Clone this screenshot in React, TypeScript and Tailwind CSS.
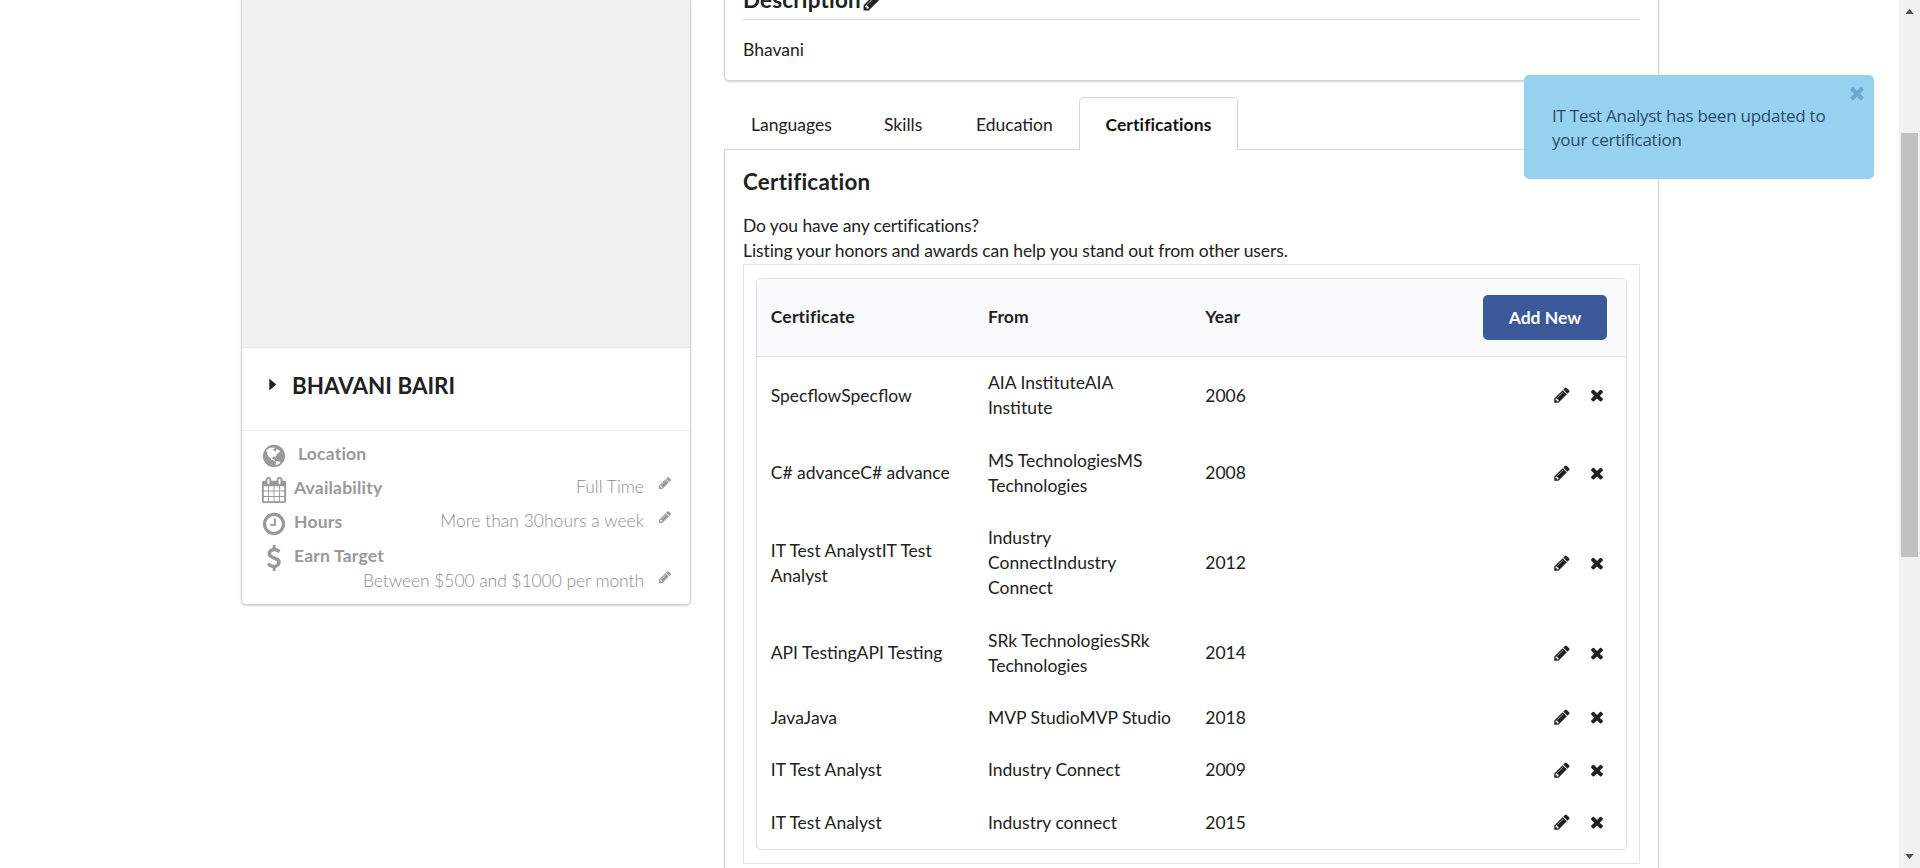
import React from "react";

const GLYPHS = {
  pencil:
    "M491 1536l91-91-235-235-91 91v107h128v128h107zm523-928q0-22-22-22-10 0-17 7l-542 542q-7 7-7 17 0 22 22 22 10 0 17-7l542-542q7-7 7-17zm-54-192l416 416-832 832h-416v-416zm683 96q0 53-37 90l-166 166-416-416 166-165q36-38 90-38 53 0 91 38l235 234q37 39 37 91z",
  times:
    "M1490 1322q0 40-28 68l-136 136q-28 28-68 28t-68-28l-294-294-294 294q-28 28-68 28t-68-28l-136-136q-28-28-28-68t28-68l294-294-294-294q-28-28-28-68t28-68l136-136q28-28 68-28t68 28l294 294 294-294q28-28 68-28t68 28l136 136q28 28 28 68t-28 68l-294 294 294 294q28 28 28 68z",
  dollar:
    "M1362 1185q0 153-99.5 263.5t-258.5 136.5v175q0 14-9 23t-23 9h-135q-13 0-22.5-9.5t-9.5-22.5v-175q-66-9-127.5-31t-101.5-44.5-74-48-46.5-37.5-17.5-18q-17-21-2-41l103-135q7-10 23-12 15-2 24 9l2 2q113 99 243 125 37 8 74 8 81 0 142.5-43t61.5-122q0-28-15-53t-33.5-42-58.5-37.5-66-32-80-32.5q-39-16-61.5-25t-61.5-26.5-62.5-31-56.5-35.5-53.5-42.5-43.5-49-35.5-58-21-66.5-8.5-78q0-138 98-242t255-134v-180q0-13 9.5-22.5t22.5-9.5h135q14 0 23 9t9 23v176q57 6 110.5 23t87 33.5 63.5 37.5 39 29 15 14q17 18 5 38l-81 146q-8 15-23 16-14 3-27-7-3-3-14.5-12t-39-26.5-58.5-32-74.5-26-85.5-11.5q-95 0-155 43t-60 111q0 26 8.5 48t29.5 41.5 39.5 33 56 31 60.5 27 70 27.5q53 20 81 31.5t76 35 75.5 42.5 62 50 53 63.5 31.5 76.5 13 94z",
  clock:
    "M1024 544v448q0 14-9 23t-23 9h-320q-14 0-23-9t-9-23v-64q0-14 9-23t23-9h224v-352q0-14 9-23t23-9h64q14 0 23 9t9 23zm416 352q0-148-73-273t-198-198-273-73-273 73-198 198-73 273 73 273 198 198 273 73 273-73 198-198 73-273zm224 0q0 209-103 385.5t-279.5 279.5-385.5 103-385.5-103-279.5-279.5-103-385.5 103-385.5 279.5-279.5 385.5-103 385.5 103 279.5 279.5 103 385.5z",
  calendar:
    "M192 1664h288v-288h-288v288zm352 0h320v-288h-320v288zm-352-352h288v-320h-288v320zm352 0h320v-320h-320v320zm-352-384h288v-288h-288v288zm736 736h320v-288h-320v288zm-384-736h320v-288h-320v288zm768 736h288v-288h-288v288zm-384-352h320v-320h-320v320zm-352-864v-288q0-13-9.5-22.5t-22.5-9.5h-64q-13 0-22.5 9.5t-9.5 22.5v288q0 13 9.5 22.5t22.5 9.5h64q13 0 22.5-9.5t9.5-22.5zm736 864h288v-320h-288v320zm-384-384h320v-288h-320v288zm384 0h288v-288h-288v288zm32-480v-288q0-13-9.5-22.5t-22.5-9.5h-64q-13 0-22.5 9.5t-9.5 22.5v288q0 13 9.5 22.5t22.5 9.5h64q13 0 22.5-9.5t9.5-22.5zm384-64v1280q0 52-38 90t-90 38h-1408q-52 0-90-38t-38-90v-1280q0-52 38-90t90-38h128v-96q0-66 47-113t113-47h64q66 0 113 47t47 113v96h384v-96q0-66 47-113t113-47h64q66 0 113 47t47 113v96h128q52 0 90 38t38 90z",
  globe:
    "M896 128q209 0 385.5 103t279.5 279.5 103 385.5-103 385.5-279.5 279.5-385.5 103-385.5-103-279.5-279.5-103-385.5 103-385.5 279.5-279.5 385.5-103zm274 521q-2 1-9.5 9.5t-13.5 9.5q2 0 4.5-5t5-11 3.5-7q6-7 22-15 14-6 52-12 34-8 51 11-2-2 9.5-13t14.5-12q3-2 15-4.5t15-7.5l2-22q-12 1-17.5-7t-6.5-21q0 2-6 8 0-7-4.5-8t-11.5 1-9 1q-10-3-15-7.5t-8-16.5-4-15q-2-5-9.5-11t-9.5-10q-1-2-2.5-5.5t-3-6.5-4-5.5-5.5-2.5-7 5-7.5 10-4.5 5q-3-2-6-1.5t-4.5 1-4.5 3-5 3.5q-3 2-8.5 3t-8.5 2q15-5-1-11-10-4-16-3 9-4 7.5-12t-8.5-14h5q-1-4-8.5-8.5t-17.5-8.5-13-6q-8-5-34-9.5t-33-.5q-5 6-4.5 10.5t4 14 3.5 12.5q1 6-5.5 13t-6.5 12q0 7 14 15.5t10 21.5q-3 8-16 16t-16 12q-5 8-1.5 18.5t10.5 16.5q2 2 1.5 4t-3.5 4.5-5.5 4-6.5 3.5l-3 2q-11 5-20.5-6t-13.5-26q-7-25-16-30-23-8-29 1-5-13-41-26-25-9-58-4 6-1 0-15-7-15-19-12 3-6 4-17.5t1-13.5q3-13 12-23 1-1 7-8.5t9.5-13.5.5-6q35 4 50-11 5-5 11.5-17t10.5-17q9-6 14-5.5t14.5 5.5 14.5 5q14 1 15.5-11t-7.5-20q12 1 3-17-4-7-8-9-12-4-27 5-8 4 2 8-1-1-9.5 10.5t-16.5 17.5-16-5q-1-1-5.5-13.5t-9.5-13.5q-8 0-16 15 3-8-11-15t-24-8q19-12-8-27-7-4-20.5-5t-19.5 4q-5 7-5.5 11.5t5 8 10.5 5.5 11.5 4 8.5 3q14 10 8 14-2 1-8.5 3.5t-11.5 4.5-6 4q-3 4 0 14t-2 14q-5-5-9-17.5t-7-16.5q7 9-25 6l-10-1q-4 0-16 2t-20.5 1-13.5-8q-4-8 0-20 1-4 4-2-4-3-11-9.5t-10-8.5q-46 15-94 41 6 1 12-1 5-2 13-6.5t10-5.5q34-14 42-7l5-5q14 16 20 25-7-4-30-1-20 6-22 12 7 12 5 18-4-3-11.5-10t-14.5-11-15-5q-16 0-22 1-146 80-235 222 7 7 12 8 4 1 5 9t2.5 11 11.5-3q9 8 3 19 1-1 44 27 19 17 21 21 3 11-10 18-1-2-9-9t-9-4q-3 5 .5 18.5t10.5 12.5q-7 0-9.5 16t-2.5 35.5-1 23.5l2 1q-3 12 5.5 34.5t21.5 19.5q-13 3 20 43 6 8 8 9 3 2 12 7.5t15 10 10 10.5q4 5 10 22.5t14 23.5q-2 6 9.5 20t10.5 23q-1 0-2.5 1t-2.5 1q3 7 15.5 14t15.5 13q1 3 2 10t3 11 8 2q2-20-24-62-15-25-17-29-3-5-5.5-15.5t-4.5-14.5q2 0 6 1.5t8.5 3.5 7.5 4 2 3q-3 7 2 17.5t12 18.5 17 19 12 13q6 6 14 19.5t0 13.5q9 0 20 10.5t17 19.5q5 8 8 26t5 24q2 7 8.5 13.5t12.5 9.5l16 8 13 7q5 2 18.5 10.5t21.5 11.5q10 4 16 4t14.5-2.5 13.5-3.5q15-2 29 15t21 21q36 19 55 11-2 1 .5 7.5t8 15.5 9 14.5 5.5 8.5q5 6 18 15t18 15q6-4 7-9-3 8 7 20t18 10q14-3 14-32-31 15-49-18 0-1-2.5-5.5t-4-8.5-2.5-8.5 0-7.5 5-3q9 0 10-3.5t-2-12.5-4-13q-1-8-11-20t-12-15q-5 9-16 8t-16-9q0 1-1.5 5.5t-1.5 6.5q-13 0-15-1 1-3 2.5-17.5t3.5-22.5q1-4 5.5-12t7.5-14.5 4-12.5-4.5-9.5-17.5-2.5q-19 1-26 20-1 3-3 10.5t-5 11.5-9 7q-7 3-24 2t-24-5q-13-8-22.5-29t-9.5-37q0-10 2.5-26.5t3-25-5.5-24.5q3-2 9-9.5t10-10.5q2-1 4.5-1.5t4.5 0 4-1.5 3-6q-1-1-4-3-3-3-4-3 7 3 28.5-1.5t27.5 1.5q15 11 22-2 0-1-2.5-9.5t-.5-13.5q5 27 29 9 3 3 15.5 5t17.5 5q3 2 7 5.5t5.5 4.5 5-.5 8.5-6.5q10 14 12 24 11 40 19 44 7 3 11 2t4.5-9.5 0-14-1.5-12.5l-1-8v-18l-1-8q-15-3-18.5-12t1.5-18.5 15-18.5q1-1 8-3.5t15.5-6.5 12.5-8q21-19 15-35 7 0 11-9-1 0-5-3t-7.5-5-4.5-2q9-5 2-16 5-3 7.5-11t7.5-10q9 12 21 2 7-8 1-16 5-7 20.5-10.5t18.5-9.5q7 2 8-2t1-12 3-12q4-5 15-9t13-5l17-11q3-4 0-4 18 2 31-11 10-11-6-20 3-6-3-9.5t-15-5.5q3-1 11.5-.5t10.5-1.5q15-10-7-16-17-5-43 12zm-163 877q206-36 351-189-3-3-12.5-4.5t-12.5-3.5q-18-7-24-8 1-7-2.5-13t-8-9-12.5-8-11-7q-2-2-7-6t-7-5.5-7.5-4.5-8.5-2-10 1l-3 1q-3 1-5.5 2.5t-5.5 3-4 3 0 2.5q-21-17-36-22-5-1-11-5.5t-10.5-7-10-1.5-11.5 7q-5 5-6 15t-2 13q-7-5 0-17.5t2-18.5q-3-6-10.5-4.5t-12 4.5-11.5 8.5-9 6.5-8.5 5.5-8.5 7.5q-3 4-6 12t-5 11q-2-4-11.5-6.5t-9.5-5.5q2 10 4 35t5 38q7 31-12 48-27 25-29 40-4 22 12 26 0 7-8 20.5t-7 21.5q0 6 2 16z",
};

function Icon({ name, className }: { name: keyof typeof GLYPHS; className?: string }) {
  return (
    <svg viewBox="0 0 1792 1792" className={className} fill="currentColor" aria-hidden="true">
      <path d={GLYPHS[name]} />
    </svg>
  );
}

const DETAILS: {
  icon: keyof typeof GLYPHS;
  label: string;
  value?: string;
  row: string;
  labelPad: string;
}[] = [
  { icon: "globe", label: "Location", row: "h-[34px]", labelPad: "pl-[11px]" },
  { icon: "calendar", label: "Availability", value: "Full Time", row: "h-[34px]", labelPad: "pl-[7px]" },
  { icon: "clock", label: "Hours", value: "More than 30hours a week", row: "h-[34px]", labelPad: "pl-[7px]" },
  { icon: "dollar", label: "Earn Target", row: "h-[26px]", labelPad: "pl-[7px]" },
];

function DetailValue({ text }: { text: string }) {
  return (
    <span className="-mt-[2px] ml-auto flex items-start pr-[18px] font-light text-[#8c8c8c]">
      {text}
      <Icon name="pencil" className="ml-[14px] mt-[2px] size-[14px] text-[#999]" />
    </span>
  );
}

function ProfileCard() {
  return (
    <section className="flex h-[605px] w-[450px] flex-col rounded-b-[5px] border border-t-0 border-[#d4d4d5] bg-white shadow-[0_1px_2px_#d4d4d5]">
      <div className="h-[347px] bg-[#f1f1f1]" />
      <div className="flex h-[83px] border-t border-[#e6e6e6] pl-[27px] pt-[23px]">
        <svg viewBox="0 0 8 14" className="mt-[7px] h-[13px] w-2" fill="currentColor">
          <path d="M0 .5 7.5 7 0 13.5z" />
        </svg>
        <h2 className="ml-[15px] text-[22.4px]/[29px] font-bold">BHAVANI BAIRI</h2>
      </div>
      <div className="border-t border-[#eee] pt-[11px] text-[#999]">
        {DETAILS.map((d) => (
          <div key={d.label} className={`flex pl-[19px] ${d.row}`}>
            <Icon name={d.icon} className="mt-[1px] size-[26px]" />
            <span className={`-mt-px font-bold tracking-[0.2px] ${d.labelPad}`}>{d.label}</span>
            {d.value && <DetailValue text={d.value} />}
          </div>
        ))}
        <div className="flex tracking-[-0.08px]">
          <DetailValue text="Between $500 and $1000 per month" />
        </div>
      </div>
    </section>
  );
}

const ROWS = [
  ["SpecflowSpecflow", "AIA InstituteAIA Institute", "2006"],
  ["C# advanceC# advance", "MS TechnologiesMS Technologies", "2008"],
  ["IT Test AnalystIT Test Analyst", "Industry ConnectIndustry Connect", "2012"],
  ["API TestingAPI Testing", "SRk TechnologiesSRk Technologies", "2014"],
  ["JavaJava", "MVP StudioMVP Studio", "2018"],
  ["IT Test Analyst", "Industry Connect", "2009"],
  ["IT Test Analyst", "Industry connect", "2015"],
];

function CertificationTable() {
  return (
    <div className="rounded-[5px] border border-[#dedfdf]">
      <div className="grid h-[78px] grid-cols-4 items-start rounded-t-[4px] border-b border-[#dfe0e1] bg-[#f9fafb] pt-[16px] font-bold">
        <div className="px-[13.75px] pt-[9px] tracking-[0.2px]">Certificate</div>
        <div className="px-[13.75px] pt-[9px] tracking-[0.2px]">From</div>
        <div className="px-[13.75px] pt-[9px] tracking-[0.2px]">Year</div>
        <div className="flex justify-end pr-[19px]">
          <button className="h-[45px] w-[124px] rounded-[5px] bg-[#3b5998] pb-[1px] text-[17.5px] font-bold text-white">
            Add New
          </button>
        </div>
      </div>
      {ROWS.map(([certificate, from, year], i) => (
        <div key={i} className="grid grid-cols-4 items-center pb-[14.25px] pt-[13.2px]">
          <div className="px-[13.75px]">{certificate}</div>
          <div className="px-[13.75px]">{from}</div>
          <div className="px-[13.75px]">{year}</div>
          <div className="flex items-center justify-end gap-[17px] pr-[20px]">
            <Icon name="pencil" className="size-[18px]" />
            <Icon name="times" className="size-[18px]" />
          </div>
        </div>
      ))}
    </div>
  );
}

function Tabs() {
  return (
    <nav className="flex h-[53px] items-stretch">
      <div className="flex w-[355px] items-center border-b border-[#d4d4d5] pl-[27px] pt-[2px]">
        <span className="w-[133px]">Languages</span>
        <span className="w-[92px]">Skills</span>
        <span>Education</span>
      </div>
      <div className="flex w-[159px] items-center justify-center rounded-t-[5px] border border-b-0 border-[#d4d4d5] tracking-[0.1px] font-bold text-black/95">
        Certifications
      </div>
      <div className="flex-1 border-b border-[#d4d4d5]" />
    </nav>
  );
}

function Toast() {
  return (
    <div className="absolute left-[1524px] top-[75px] h-[104px] w-[350px] rounded-[5px] bg-[#97d1f0] pl-[28px] pt-[29px] font-['Open_Sans','Noto_Sans',sans-serif] text-[17px]/[24px] tracking-[-0.25px] text-[#2b4a68]">
      <Icon name="times" className="absolute right-[7px] top-[8px] size-[20px] text-[#69abd0]" />
      <p className="w-[310px]">
        IT Test Analyst has been updated to
        <br />
        your certification
      </p>
    </div>
  );
}

function Scrollbar() {
  return (
    <div className="ml-auto flex h-full w-[21px] flex-col items-center bg-[#f1f1f1] text-[#505050]">
      <svg viewBox="0 0 10 6" className="mt-[9px] h-[5px] w-[9px]" fill="currentColor">
        <path d="M5 0 10 6H0z" />
      </svg>
      <div className="mt-[119px] h-[424px] w-[17px] bg-[#c1c1c1]" />
      <svg viewBox="0 0 10 6" className="mb-[9px] mt-auto h-[5px] w-[9px]" fill="currentColor">
        <path d="M5 6 10 0H0z" />
      </svg>
    </div>
  );
}

export default function App() {
  return (
    <div className="relative flex h-[868px] w-[1920px] items-start overflow-hidden bg-white font-[Lato,'Liberation_Sans',sans-serif] text-[17.5px]/[25px] text-[#212122]">
      <div className="ml-[241px]">
        <ProfileCard />
      </div>
      <main className="ml-[33px] w-[935px]">
        <section className="h-[81px] rounded-b-[5px] border border-t-0 border-[#d4d4d5] px-[18px] shadow-[0_1px_2px_#d4d4d5]">
          <div className="flex h-[20px] items-end border-b border-[#dededf]">
            <h3 className="h-[33px] text-[22.4px]/[28px] font-bold tracking-[0.2px]">Description</h3>
            <Icon name="pencil" className="mb-[7px] ml-px size-[22px]" />
          </div>
          <p className="pt-[17px]">Bhavani</p>
        </section>
        <div className="h-4" />
        <Tabs />
        <section className="h-[730px] border-x border-[#d4d4d5] px-[18px] pt-[17px]">
          <h3 className="text-[22.4px]/[29px] font-bold tracking-[0.25px]">Certification</h3>
          <p className="mt-[17px] tracking-[-0.1px]">Do you have any certifications?</p>
          <p className="tracking-[-0.1px]">
            Listing your honors and awards can help you stand out from other users.
          </p>
          <div className="mt-[1px] h-[600px] border border-[#e4e5e6] px-[12px] pt-[13px]">
            <CertificationTable />
          </div>
        </section>
      </main>
      <Scrollbar />
      <Toast />
    </div>
  );
}
